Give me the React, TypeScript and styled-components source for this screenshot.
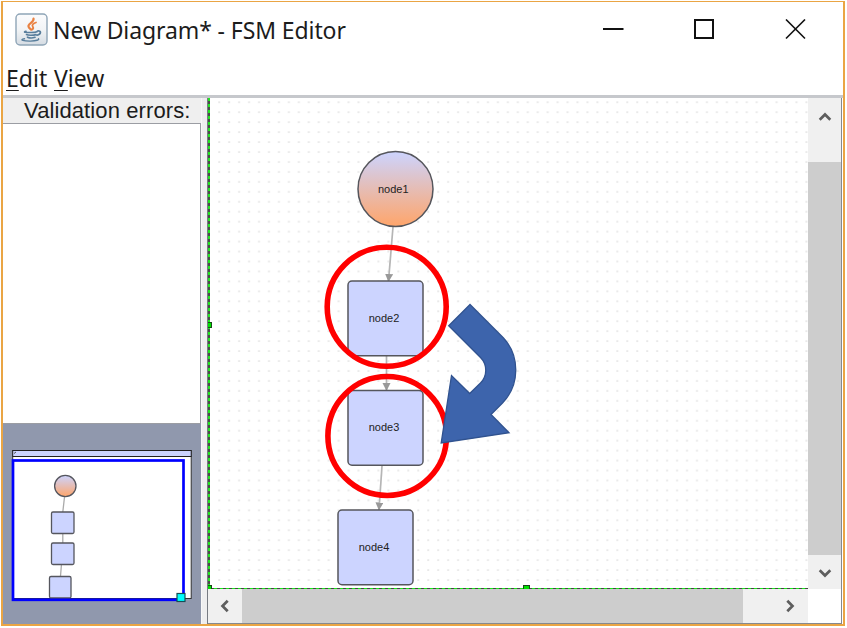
import React from "react";
import styled, { createGlobalStyle } from "styled-components";

const GlobalStyle = createGlobalStyle`
  * { box-sizing: border-box; }
  body { margin: 0; background: #fff; overflow: hidden; }
`;

const Window = styled.div`
  width: 844px;
  height: 625px;
  margin: 1px 0 0 1px;
  border: solid #eaa544;
  border-width: 1px 2px 2px 2px;
  display: flex;
  flex-direction: column;
  background: #fff;
  color: #1c1c1c;
  font-family: "Noto Sans", sans-serif;
`;

const TitleBar = styled.header`
  height: 59px;
  display: flex;
  align-items: center;
  padding: 0 37px 4px 12px;
`;

const Title = styled.h1`
  margin: 0 0 0 5px;
  flex: 1;
  font-size: 23px;
  line-height: 32px;
  font-weight: 400;
  letter-spacing: -0.1px;
  white-space: nowrap;
`;

const Controls = styled.div`
  display: flex;
  gap: 70px;
  svg { display: block; }
`;

const MenuBar = styled.nav`
  height: 34px;
  display: flex;
  gap: 9px;
  padding: 0 3px;
  font-size: 23px;
  line-height: 34px;
`;

const MenuItem = styled.span<{ $width: number }>`
  width: ${(p) => p.$width}px;
  white-space: nowrap;
  &::first-letter {
    text-decoration: underline;
    text-decoration-thickness: 1px;
    text-underline-offset: 3px;
  }
`;

const Body = styled.main`
  flex: 1;
  min-height: 0;
  display: flex;
  border-top: 3px solid #c6c8cc;
`;

const Sidebar = styled.aside`
  width: 198px;
  display: flex;
  flex-direction: column;
  background: #efefef;
`;

const SidebarLabel = styled.div`
  height: 25px;
  padding-left: 21px;
  font: 22px/26px "Liberation Sans", sans-serif;
  letter-spacing: 0.1px;
  white-space: nowrap;
`;

const ErrorList = styled.div`
  height: 301px;
  background: #fff;
  border: 1px solid #9b9da3;
  border-left: 0;
`;

const Overview = styled.div`
  flex: 1;
  background: #9098ad;
  svg { display: block; }
`;

const Divider = styled.div`
  width: 7px;
  background: #eeeeef;
  border-right: 1px solid #777b82;
  border-left: 1px solid #f8f8f8;
`;

const Workspace = styled.section`
  width: 634px;
  display: grid;
  grid-template-columns: 600px 33px;
  grid-template-rows: 491px 34px;
  border-right: 1px solid #85898f;
  border-bottom: 1px solid #85898f;
`;

const Canvas = styled.svg`
  display: block;
  background: #fff;
`;

const ScrollBar = styled.div<{ $vertical?: boolean }>`
  display: flex;
  flex-direction: ${(p) => (p.$vertical ? "column" : "row")};
  background: #f0f0f0;
`;

const ScrollButton = styled.div<{ $length: number; $vertical?: boolean }>`
  flex: 0 0 ${(p) => p.$length}px;
  display: flex;
  flex-direction: ${(p) => (p.$vertical ? "column" : "row")};
  align-items: center;
`;

const Thumb = styled.div`
  flex: 1;
  background: #cdcdcd;
`;

const Chevron = styled.svg<{ $turn: number; $before: number; $vertical?: boolean }>`
  display: block;
  flex: none;
  margin: ${(p) => (p.$vertical ? `${p.$before}px 0 0 0` : `0 0 0 ${p.$before}px`)};
  transform: rotate(${(p) => p.$turn}deg);
`;

const Arrowhead = ({ turn, before, vertical }: { turn: number; before: number; vertical?: boolean }) => (
  <Chevron width="14" height="14" viewBox="0 0 14 14" $turn={turn} $before={before} $vertical={vertical}>
    <path d="M1.7 9.7 7 4.5l5.3 5.2" fill="none" stroke="#5e5e5e" strokeWidth="2.7" />
  </Chevron>
);

const JavaIcon = () => (
  <svg width="33" height="33" viewBox="0 0 33 33">
    <defs>
      <linearGradient id="badge" x1="0" y1="0" x2="0" y2="1">
        <stop offset="0" stopColor="#fbfcfd" />
        <stop offset="0.5" stopColor="#f2f4f6" />
        <stop offset="1" stopColor="#d5dce3" />
      </linearGradient>
    </defs>
    <rect x="1" y="1" width="31" height="31" rx="4" fill="url(#badge)" stroke="#8fa5b7" strokeWidth="1.4" />
    <g fill="none" strokeLinecap="round">
      <path d="M18.5 5.500c1 4-6 5-5 8 .3 1.500 1.800 2.200 2.700 3.200" stroke="#e98243" strokeWidth="2.200" />
      <path d="M21 9.500c-2.500.8-4.500 2.300-3.200 4.200.9 1.300.5 2-.6 2.800" stroke="#e98243" strokeWidth="1.800" />
      <g stroke="#597e9c" strokeWidth="1.700">
        <path d="M11 18.300c-3 .7-1 1.300 5 1.200 3 0 5-.4 6-.8" />
        <path d="M22.500 18c4-.7 4 3-.5 4.200" />
        <path d="M11.500 21.600c1.500.9 7 .8 9.500 0M12.500 24.200c2 .9 5.500.8 7.500.1" />
        <path d="M9.500 25.800c-6 1-.5 2.400 6 2.300 6-.1 9-1.300 8-2.400" strokeWidth="1.400" />
      </g>
    </g>
  </svg>
);

const NODES = [
  { x: 348, y: 281, name: "node2" },
  { x: 348, y: 390.5, name: "node3" },
  { x: 338, y: 510, name: "node4" },
];

const EDGES = [
  [393, 227, 388.5, 281],
  [386.5, 356, 386.5, 390],
  [382, 466, 379, 509.5],
];

const MINI_NODES = [
  { x: 51.5, y: 512 },
  { x: 51.5, y: 543 },
  { x: 49.5, y: 576.5 },
];

const Gradient = ({ id }: { id: string }) => (
  <linearGradient id={id} x1="0" y1="0" x2="0" y2="1">
    <stop offset="0" stopColor="#ccd4ff" />
    <stop offset="1" stopColor="#ffa56a" />
  </linearGradient>
);

const DiagramCanvas = () => (
  <Canvas width="600" height="491" viewBox="208 98 600 491">
    <defs>
      <pattern id="grid" x="214" y="97.2" width="9.954" height="9.954" patternUnits="userSpaceOnUse">
        <rect x="4.2" y="4.3" width="2" height="1.5" fill="#e4e4e4" />
      </pattern>
      <Gradient id="start" />
      <marker id="tip" markerWidth="9" markerHeight="9" refX="7" refY="4" orient="auto" markerUnits="userSpaceOnUse">
        <path d="M0 0 8 4 0 8Z" fill="#999" />
      </marker>
    </defs>
    <rect x="213" y="98" width="595" height="488" fill="url(#grid)" />
    {EDGES.map(([x1, y1, x2, y2]) => (
      <line key={y1} x1={x1} y1={y1} x2={x2} y2={y2} stroke="#b5b5b5" strokeWidth="1.7" markerEnd="url(#tip)" />
    ))}
    <g stroke="#55565c" strokeWidth="1.5">
      <circle cx="395.5" cy="189" r="37.5" fill="url(#start)" />
      {NODES.map((n) => (
        <rect key={n.name} x={n.x} y={n.y} width="75" height="74.7" rx="4" fill="#ccd4ff" />
      ))}
    </g>
    <g fill="#222" fontFamily="Liberation Sans, sans-serif" fontSize="11" textAnchor="middle">
      <text x="393.3" y="192.5">node1</text>
      {NODES.map((n) => (
        <text key={n.name} x={n.x + 36} y={n.y + 40.5}>{n.name}</text>
      ))}
    </g>
    <g fill="none" stroke="#f00" strokeWidth="5.6">
      <ellipse cx="386.7" cy="306.8" rx="59.5" ry="59.5" />
      <ellipse cx="387.2" cy="436" rx="59.3" ry="59.5" />
    </g>
    <path
      d="M470 304.5 448.7 325.7 480.5 357.5C487.5 364.5 487.5 376 480.5 383L469.7 393.5 451.5 375.5 441.2 443 509 432.7 491 414.5 502.500 403C520 385 520 356 503.5 338Z"
      fill="#3d64ac"
      stroke="#30528f"
      strokeWidth="1.3"
    />
    <g fill="none" shapeRendering="crispEdges">
      <path d="M209 98V588" stroke="#4a4a4a" strokeWidth="2" />
      <path d="M209 98V588" stroke="#22e622" strokeWidth="2" strokeDasharray="3 3" />
      <path d="M208 588.5H808" stroke="#454545" />
      <path d="M208 588.5H808" stroke="#18e818" strokeDasharray="3 3" />
    </g>
    <g fill="#00e000" stroke="#174b17">
      <rect x="206.5" y="322.5" width="5" height="5" />
      <rect x="206.5" y="585.5" width="5" height="5" />
      <rect x="523.5" y="585.5" width="6" height="5" />
    </g>
  </Canvas>
);

const MiniMap = () => (
  <svg width="198" height="200" viewBox="3 424 198 200">
    <defs><Gradient id="miniStart" /></defs>
    <rect x="12.7" y="450.5" width="178.5" height="148" fill="#fff" stroke="#333" />
    <rect x="12.7" y="450.5" width="178.5" height="6" fill="#ccd4ff" stroke="#222" />
    <path d="M14 453.5 16 452" stroke="#555" />
    <path d="M64.5 497 62.8 512M62.8 533V543M61.5 564 60.5 576" stroke="#aaa" strokeWidth="1.3" />
    <g stroke="#55565e" strokeWidth="1.3">
      <circle cx="65.3" cy="486" r="10.7" fill="url(#miniStart)" />
      {MINI_NODES.map((n) => (
        <rect key={n.y} x={n.x} y={n.y} width={n.y > 570 ? 21.5 : 22.5} height="21.5" rx="1.5" fill="#ccd4ff" />
      ))}
    </g>
    <rect x="13" y="460.5" width="170.5" height="139.3" fill="none" stroke="#00f" strokeWidth="2.7" />
    <rect x="177" y="593.5" width="8" height="8" fill="#00ffff" stroke="#164d55" strokeWidth="1.2" />
  </svg>
);

export default function App() {
  return (
    <>
      <GlobalStyle />
      <Window>
        <TitleBar>
          <JavaIcon />
          <Title>New Diagram* - FSM Editor</Title>
          <Controls>
            <svg width="21" height="21"><path d="M0 10h20.500" stroke="#111" strokeWidth="2" /></svg>
            <svg width="21" height="21"><rect x="1" y="1" width="18" height="18" fill="none" stroke="#111" strokeWidth="2" /></svg>
            <svg width="21" height="21"><path d="m1 .5 19 19M20 .5 1 19.500" stroke="#111" strokeWidth="1.600" /></svg>
          </Controls>
        </TitleBar>
        <MenuBar>
          <MenuItem $width={39}>Edit</MenuItem>
          <MenuItem $width={52}>View</MenuItem>
        </MenuBar>
        <Body>
          <Sidebar>
            <SidebarLabel>Validation errors:</SidebarLabel>
            <ErrorList />
            <Overview><MiniMap /></Overview>
          </Sidebar>
          <Divider />
          <Workspace>
            <DiagramCanvas />
            <ScrollBar $vertical>
              <ScrollButton $length={64} $vertical><Arrowhead turn={0} before={12} vertical /></ScrollButton>
              <Thumb />
              <ScrollButton $length={34} $vertical><Arrowhead turn={180} before={11} vertical /></ScrollButton>
            </ScrollBar>
            <ScrollBar>
              <ScrollButton $length={34}><Arrowhead turn={-90} before={10} /></ScrollButton>
              <Thumb />
              <ScrollButton $length={65}><Arrowhead turn={90} before={40} /></ScrollButton>
            </ScrollBar>
          </Workspace>
        </Body>
      </Window>
    </>
  );
}
